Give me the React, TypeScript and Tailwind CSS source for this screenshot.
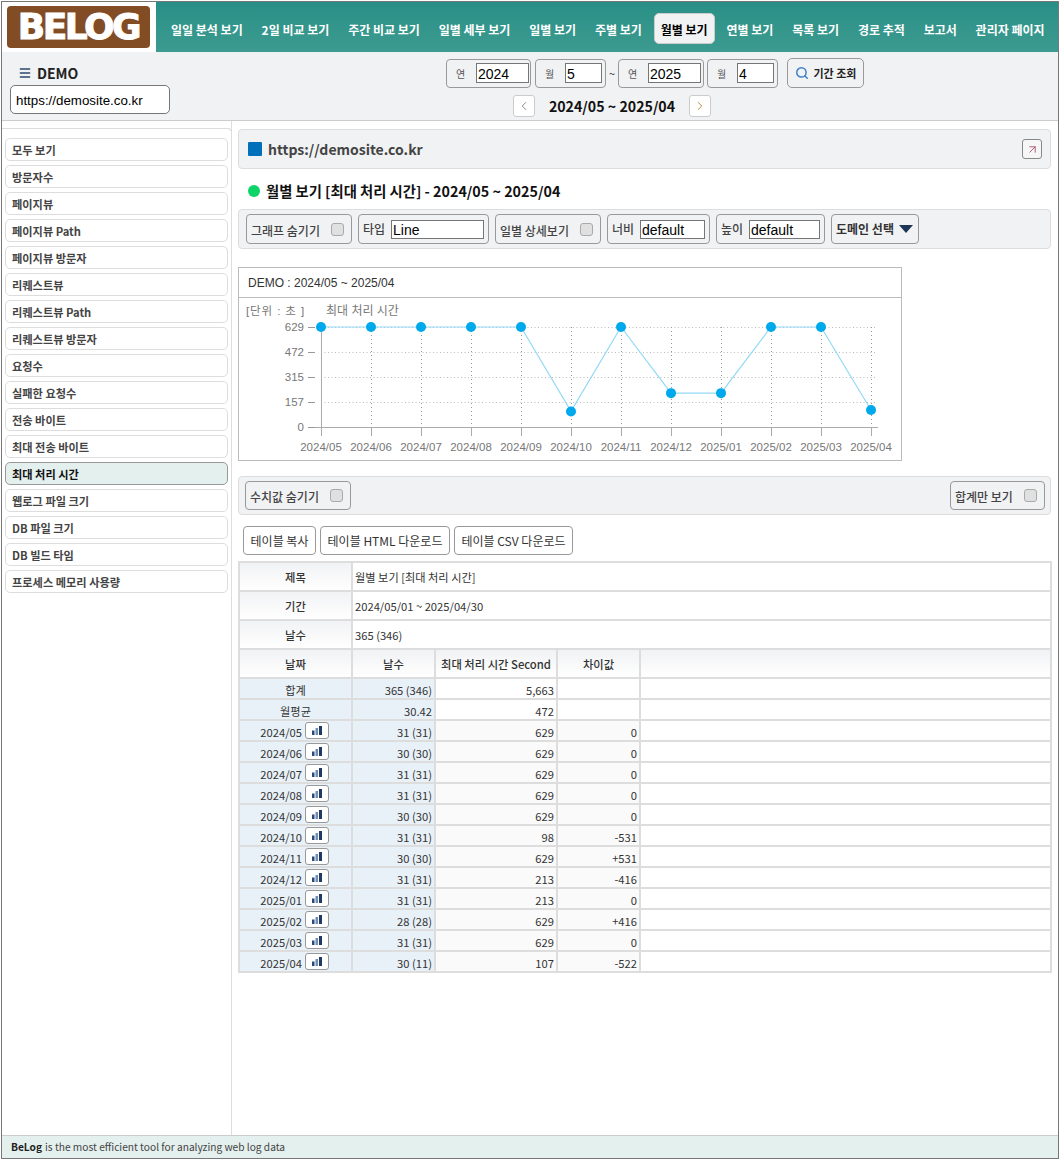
import { Menu, Search, ChevronLeft, ChevronRight, ArrowUpRight } from "lucide-react";

const navItems = ["일일 분석 보기", "2일 비교 보기", "주간 비교 보기", "일별 세부 보기", "일별 보기", "주별 보기", "월별 보기", "연별 보기", "목록 보기", "경로 추적", "보고서", "관리자 페이지"];
const sideItems = ["모두 보기", "방문자수", "페이지뷰", "페이지뷰 Path", "페이지뷰 방문자", "리퀘스트뷰", "리퀘스트뷰 Path", "리퀘스트뷰 방문자", "요청수", "실패한 요청수", "전송 바이트", "최대 전송 바이트", "최대 처리 시간", "웹로그 파일 크기", "DB 파일 크기", "DB 빌드 타임", "프로세스 메모리 사용량"];
const months = ["2024/05", "2024/06", "2024/07", "2024/08", "2024/09", "2024/10", "2024/11", "2024/12", "2025/01", "2025/02", "2025/03", "2025/04"];
const values = [629, 629, 629, 629, 629, 98, 629, 213, 213, 629, 629, 107];
const rows = [
  ["2024/05", "31 (31)", "629", "0"],
  ["2024/06", "30 (30)", "629", "0"],
  ["2024/07", "31 (31)", "629", "0"],
  ["2024/08", "31 (31)", "629", "0"],
  ["2024/09", "30 (30)", "629", "0"],
  ["2024/10", "31 (31)", "98", "-531"],
  ["2024/11", "30 (30)", "629", "+531"],
  ["2024/12", "31 (31)", "213", "-416"],
  ["2025/01", "31 (31)", "213", "0"],
  ["2025/02", "28 (28)", "629", "+416"],
  ["2025/03", "31 (31)", "629", "0"],
  ["2025/04", "30 (11)", "107", "-522"],
];

const inputCls = "border border-[#767676] bg-white pl-px pt-[2px] font-['Liberation_Sans',sans-serif] text-[14px] font-normal leading-none text-black outline-none";
const boxCls = "flex items-center rounded-[4px] border border-[#999] bg-[#f1f2f4]";
const baseCell = "border-2 border-[#ddd] px-[2px] text-[11.2px] leading-[16px] text-[#333]";
const cellCls = `${baseCell} pt-[3px]`;
const headCls = "border-2 border-[#ddd] bg-gradient-to-b from-[#f1f2f4] to-white pt-[1px] text-center text-[11.3px] font-medium text-[#333]";

function Check() {
  return <span className="block h-[13px] w-[13px] rounded-[3px] border border-[#aaa] bg-[#e0e0e0]" />;
}

function DateBox({ label, value, box, input }: { label: string; value: string; box: string; input: string }) {
  return (
    <div className={`${boxCls} h-[29px] ${box}`}>
      <span className="w-[29px] pr-[2px] text-center text-[10px] text-[#555]">{label}</span>
      <input readOnly value={value} className={`${inputCls} h-[20px] ${input}`} />
    </div>
  );
}

function BarIcon() {
  return (
    <svg width="10" height="9" viewBox="0 0 10 9">
      <rect x="0" y="4.5" width="2.5" height="4.5" fill="#2b4a78" />
      <rect x="3.5" y="2" width="2.5" height="7" fill="#6d8fb5" />
      <rect x="7" y="0" width="3" height="9" fill="#1f3a63" />
    </svg>
  );
}

function Chart() {
  const xAt = (i: number) => 321 + i * 50;
  const yAt = (v: number) => 427 - (v / 629) * 100;
  const points = values.map((v, i) => `${xAt(i)},${yAt(v)}`).join(" ");
  return (
    <svg viewBox="239 298 662 162" className="block h-[162px] w-[662px]">
      <g fontFamily="'Liberation Sans','Noto Sans CJK KR',sans-serif" fontSize="11.5" fill="#777">
        <text x="246" y="315" letterSpacing="0.9">[단위 : 초 ]</text>
        <text x="326" y="315" fontSize="12">최대 처리 시간</text>
        {[[629, 327], [472, 352], [315, 377], [157, 402], [0, 427]].map(([v, y]) => (
          <g key={v}>
            <text x="304" y={y + 4} textAnchor="end">{v}</text>
            <line x1="308" x2="315" y1={y + 0.5} y2={y + 0.5} stroke="#999" />
            {v !== 0 && <line x1="321" x2="877" y1={y + 0.5} y2={y + 0.5} stroke="#bbb" strokeDasharray="1 2.5" />}
          </g>
        ))}
        {months.map((m, i) => (
          <g key={m}>
            {i > 0 && <line x1={xAt(i) + 0.5} x2={xAt(i) + 0.5} y1="327" y2="427" stroke="#999" strokeDasharray="1 3" />}
            <line x1={xAt(i) + 0.5} x2={xAt(i) + 0.5} y1="427" y2="436" stroke="#aaa" />
            <text x={xAt(i)} y="451" textAnchor="middle">{m}</text>
          </g>
        ))}
      </g>
      <line x1="321.5" x2="321.5" y1="327" y2="427" stroke="#aaa" />
      <line x1="315" x2="878" y1="427.5" y2="427.5" stroke="#aaa" />
      <polyline points={points} fill="none" stroke="#92d9f6" strokeWidth="1.2" />
      {values.map((v, i) => (
        <circle key={i} cx={xAt(i)} cy={yAt(v)} r="5" fill="#00a8ec" />
      ))}
    </svg>
  );
}

export default function App() {
  return (
    <div className="ml-px mt-px flex h-[1158px] w-[1058px] flex-col border border-[#777] bg-white font-['Noto_Sans_CJK_KR',sans-serif] text-[#333]">
      {/* top nav */}
      <header className="flex h-[50px] shrink-0">
        <div className="flex w-[154px] shrink-0 items-center bg-white pl-[5px]">
          <div className="flex h-[42px] w-[143px] items-center justify-center rounded-[4px] bg-[#824c24] font-['DejaVu_Sans',sans-serif] text-[36px] font-bold leading-none text-white">
            <span className="tracking-[-2.5px] [-webkit-text-stroke:1px_white]">BELOG</span>
          </div>
        </div>
        <nav className="flex flex-1 items-center gap-[4.85px] bg-gradient-to-b from-[#288f86] to-[#3d9b90] pl-[8px] pt-[3px]">
          {navItems.map((item) => (
            <a key={item} className={item === "월별 보기" ? "flex h-[31px] items-center rounded-[5px] border border-[#ccc] bg-[#f1f2f4] px-[6px] pt-[3px] text-[12px] font-bold text-black" : "flex h-[31px] items-center px-[7px] pt-[3px] text-[12px] font-bold text-white"}>
              {item}
            </a>
          ))}
        </nav>
      </header>

      {/* period toolbar */}
      <div className="flex h-[69px] shrink-0 border-b border-[#ccc] bg-[#f1f2f4]">
        <div className="w-[444px] shrink-0 pl-[8px] pt-[9px]">
          <div className="flex h-[24px] items-center gap-[5px] pl-[8px] text-[14px] font-bold text-[#222]">
            <Menu size={14} strokeWidth={2.5} className="text-[#2b4a6b]" />
            <span>DEMO</span>
          </div>
          <div className="flex h-[29px] w-[160px] items-center rounded-[5px] border border-[#777] bg-white pl-[5px] pt-[2px] font-['Liberation_Sans',sans-serif] text-[13.33px] text-black">https://demosite.co.kr</div>
        </div>
        <div className="pt-[6px]">
          <div className="flex items-center">
            <DateBox label="연" value="2024" box="w-[85px]" input="w-[53px]" />
            <div className="ml-[4px]" />
            <DateBox label="월" value="5" box="w-[71px]" input="w-[37px]" />
            <span className="w-[12px] text-center text-[11px]">~</span>
            <DateBox label="연" value="2025" box="w-[86px]" input="w-[53px]" />
            <div className="ml-[3px]" />
            <DateBox label="월" value="4" box="w-[71px]" input="w-[37px]" />
            <button className="ml-[9px] flex h-[30px] w-[77px] items-center justify-center gap-[5px] rounded-[5px] border border-[#999] text-[11px] font-bold text-[#222]">
              <Search size={14} strokeWidth={2.5} className="text-[#3b7fc8]" />
              기간 조회
            </button>
          </div>
          <div className="mt-[6px] flex items-center pl-[67px]">
            <button className="flex h-[22px] w-[22px] items-center justify-center rounded-[3px] border border-[#ccc] bg-white"><ChevronLeft size={14} strokeWidth={1.5} className="text-[#777]" /></button>
            <span className="w-[154px] pt-[2px] text-center text-[14.2px] font-bold text-[#111]">2024/05 ~ 2025/04</span>
            <button className="flex h-[22px] w-[22px] items-center justify-center rounded-[3px] border border-[#ccc] bg-white"><ChevronRight size={14} strokeWidth={1.5} className="text-[#b07a20]" /></button>
          </div>
        </div>
      </div>

      <div className="flex min-h-0 flex-1">
        {/* side menu */}
        <aside className="w-[230px] shrink-0 border-r border-[#ddd] pt-[7px]">
          <div className="h-[3px] rounded-tr-[4px] border-r border-t border-[#ddd]" />
          <ul className="flex flex-col gap-[4px] pl-[3px] pr-[3px] pt-[7px]">
            {sideItems.map((item) => (
              <li key={item} className={item === "최대 처리 시간" ? "flex h-[23px] items-center rounded-[5px] border border-[#999] bg-[#e4f0ee] pl-[6px] pt-[2px] text-[11.2px] font-bold text-[#111]" : "flex h-[23px] items-center rounded-[5px] border border-[#ddd] pl-[6px] pt-[2px] text-[11.2px] font-bold text-[#444]"}>
                {item}
              </li>
            ))}
          </ul>
        </aside>

        <main className="min-w-0 flex-1 pl-[6px] pr-[7px] pt-[8px]">
          <div className="flex h-[40px] items-center justify-between rounded-[4px] border border-[#ddd] bg-[#f1f2f4] pl-[9px] pr-[8px]">
            <div className="flex items-center gap-[6px] text-[14px] font-bold text-[#444]">
              <span className="h-[14px] w-[14px] rounded-[1px] bg-[#0070bb]" />
              https://demosite.co.kr
            </div>
            <button className="flex h-[20px] w-[20px] items-center justify-center rounded-[3px] border border-[#888] bg-[#f6f6f6]"><ArrowUpRight size={13} strokeWidth={1.5} className="text-[#a0405a]" /></button>
          </div>

          <h2 className="mt-[12px] flex h-[20px] items-center gap-[6px] text-[14.3px] font-bold text-[#111]">
            <span className="ml-[10px] h-[12px] w-[12px] rounded-full bg-[#0dd468]" />
            월별 보기 [최대 처리 시간] - 2024/05 ~ 2025/04
          </h2>

          <div className="mt-[8px] flex h-[40px] items-center gap-[6px] rounded-[4px] border border-[#ddd] bg-[#f1f2f4] pl-[7px] text-[12px] font-medium text-[#444]">
            <div className={`${boxCls} h-[30px] w-[106px] justify-between pl-[4px] pr-[7px]`}><span className="pt-[4px]">그래프 숨기기</span><Check /></div>
            <div className={`${boxCls} h-[30px] w-[131px] justify-between pl-[4px] pr-[4px]`}><span>타입</span><input readOnly value="Line" className={`${inputCls} h-[19px] w-[93px]`} /></div>
            <div className={`${boxCls} h-[30px] w-[106px] justify-between pl-[4px] pr-[7px]`}><span className="pt-[4px]">일별 상세보기</span><Check /></div>
            <div className={`${boxCls} h-[30px] w-[103px] justify-between pl-[4px] pr-[4px]`}><span>너비</span><input readOnly value="default" className={`${inputCls} h-[19px] w-[65px]`} /></div>
            <div className={`${boxCls} h-[30px] w-[109px] justify-between pl-[4px] pr-[4px]`}><span>높이</span><input readOnly value="default" className={`${inputCls} h-[19px] w-[71px]`} /></div>
            <div className={`${boxCls} h-[30px] w-[88px] justify-between pl-[4px] pr-[5px] font-bold text-[#333]`}>
              <span>도메인 선택</span>
              <svg width="14" height="8" viewBox="0 0 14 8"><path d="M0 0H14L7 8Z" fill="#1f3556" /></svg>
            </div>
          </div>

          <div className="mt-[18px] w-[664px] border border-[#bbb]">
            <div className="flex h-[30px] items-center border-b border-[#bbb] pl-[9px] font-['Liberation_Sans','Noto_Sans_CJK_KR',sans-serif] text-[12px] text-[#333]">DEMO : 2024/05 ~ 2025/04</div>
            <Chart />
          </div>

          <div className="mt-[15px] flex h-[39px] items-center justify-between rounded-[4px] border border-[#ddd] bg-[#f1f2f4] pl-[6px] pr-[5px] text-[12px] font-medium text-[#444]">
            <div className={`${boxCls} h-[29px] w-[106px] justify-between pl-[4px] pr-[7px]`}><span className="pt-[3px]">수치값 숨기기</span><Check /></div>
            <div className={`${boxCls} h-[29px] w-[95px] justify-between pl-[4px] pr-[7px]`}><span className="pt-[3px]">합계만 보기</span><Check /></div>
          </div>

          <div className="mt-[11px] flex gap-[4px] pl-[5px] text-[12px] text-[#333]">
            <button className="h-[29px] w-[73px] rounded-[4px] border border-[#999] bg-white pt-[1px]">테이블 복사</button>
            <button className="h-[29px] w-[130px] rounded-[4px] border border-[#999] bg-white pt-[1px]">테이블 HTML 다운로드</button>
            <button className="h-[29px] w-[119px] rounded-[4px] border border-[#999] bg-white pt-[1px]">테이블 CSV 다운로드</button>
          </div>

          <table className="mt-[6px] w-[814px] table-fixed border-collapse">
            <colgroup>
              <col className="w-[113px]" />
              <col className="w-[83px]" />
              <col className="w-[122px]" />
              <col className="w-[83px]" />
              <col />
            </colgroup>
            <tbody>
              <tr className="h-[29px]"><th className={headCls}>제목</th><td colSpan={4} className={baseCell}>월별 보기 [최대 처리 시간]</td></tr>
              <tr className="h-[29px]"><th className={headCls}>기간</th><td colSpan={4} className={baseCell}>2024/05/01 ~ 2025/04/30</td></tr>
              <tr className="h-[29px]"><th className={headCls}>날수</th><td colSpan={4} className={baseCell}>365 (346)</td></tr>
              <tr className="h-[29px]">
                <th className={headCls}>날짜</th>
                <th className={headCls}>날수</th>
                <th className={headCls}>최대 처리 시간 Second</th>
                <th className={headCls}>차이값</th>
                <th className={headCls} />
              </tr>
              <tr className="h-[21px]">
                <td className={`${cellCls} bg-[#e9f1f8] text-center`}>합계</td>
                <td className={`${cellCls} bg-[#e9f1f8] text-right`}>365 (346)</td>
                <td className={`${cellCls} text-right`}>5,663</td>
                <td className={cellCls} />
                <td className={cellCls} />
              </tr>
              <tr className="h-[21px]">
                <td className={`${cellCls} bg-[#e9f1f8] text-center`}>월평균</td>
                <td className={`${cellCls} bg-[#e9f1f8] text-right`}>30.42</td>
                <td className={`${cellCls} text-right`}>472</td>
                <td className={cellCls} />
                <td className={cellCls} />
              </tr>
              {rows.map((r) => (
                <tr key={r[0]} className="h-[21px]">
                  <td className={`${baseCell} bg-[#e9f1f8]`}>
                    <div className="flex h-[19px] items-center justify-end gap-[3px] pr-[20px]">
                      <span className="pt-[3px]">{r[0]}</span>
                      <span className="flex h-[17px] w-[24px] items-center justify-center rounded-[3px] border border-[#999] bg-white"><BarIcon /></span>
                    </div>
                  </td>
                  <td className={`${cellCls} bg-[#e9f1f8] text-right`}>{r[1]}</td>
                  <td className={`${cellCls} bg-[#fafafa] text-right`}>{r[2]}</td>
                  <td className={`${cellCls} bg-[#fafafa] text-right`}>{r[3]}</td>
                  <td className={cellCls} />
                </tr>
              ))}
            </tbody>
          </table>
        </main>
      </div>

      <footer className="flex h-[23px] shrink-0 items-center border-t border-[#ccc] bg-[#e4f0ee] pl-[9px] text-[10.2px] text-[#444]">
        <b className="mr-[3px] text-[#222]">BeLog</b> is the most efficient tool for analyzing web log data
      </footer>
    </div>
  );
}
